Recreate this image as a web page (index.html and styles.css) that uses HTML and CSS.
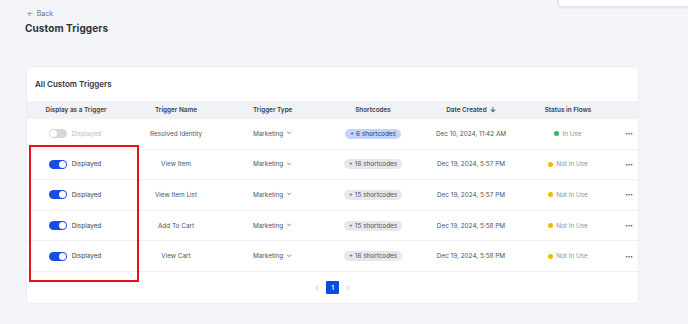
FILE: index.html
```html
<!DOCTYPE html>
<html>
<head>
<meta charset="utf-8">
<link rel="stylesheet" href="styles.css">
</head>
<body>
<div class="popover"></div>
<div class="page">
  <div class="back"><span class="arrow">&#8592;</span> Back</div>
  <h1 class="title">Custom Triggers</h1>
  <div class="card">
    <div class="card-title">All Custom Triggers</div>
    <div class="table">
      <div class="row head">
        <div class="c c1">Display as a Trigger</div>
        <div class="c c2">Trigger Name</div>
        <div class="c c3">Trigger Type</div>
        <div class="c c4">Shortcodes</div>
        <div class="c c5">Date Created <span class="sort">&#8595;</span></div>
        <div class="c c6">Status in Flows</div>
        <div class="c c7"></div>
      </div>
      <div class="row">
        <div class="c c1"><span class="toggle off"></span><span class="disp muted">Displayed</span></div>
        <div class="c c2">Resolved Identity</div>
        <div class="c c3">Marketing <span class="chev">&#8964;</span></div>
        <div class="c c4"><span class="pill blue">+ 6 shortcodes</span></div>
        <div class="c c5">Dec 10, 2024, 11:42 AM</div>
        <div class="c c6"><span class="dot green"></span><span class="status">In Use</span></div>
        <div class="c c7">&middot;&middot;&middot;</div>
      </div>
      <div class="row">
        <div class="c c1"><span class="toggle"></span><span class="disp">Displayed</span></div>
        <div class="c c2">View Item</div>
        <div class="c c3">Marketing <span class="chev">&#8964;</span></div>
        <div class="c c4"><span class="pill">+ 16 shortcodes</span></div>
        <div class="c c5">Dec 19, 2024, 5:57 PM</div>
        <div class="c c6"><span class="dot yellow"></span><span class="status">Not In Use</span></div>
        <div class="c c7">&middot;&middot;&middot;</div>
      </div>
      <div class="row">
        <div class="c c1"><span class="toggle"></span><span class="disp">Displayed</span></div>
        <div class="c c2">View Item List</div>
        <div class="c c3">Marketing <span class="chev">&#8964;</span></div>
        <div class="c c4"><span class="pill">+ 15 shortcodes</span></div>
        <div class="c c5">Dec 19, 2024, 5:57 PM</div>
        <div class="c c6"><span class="dot yellow"></span><span class="status">Not In Use</span></div>
        <div class="c c7">&middot;&middot;&middot;</div>
      </div>
      <div class="row">
        <div class="c c1"><span class="toggle"></span><span class="disp">Displayed</span></div>
        <div class="c c2">Add To Cart</div>
        <div class="c c3">Marketing <span class="chev">&#8964;</span></div>
        <div class="c c4"><span class="pill">+ 15 shortcodes</span></div>
        <div class="c c5">Dec 19, 2024, 5:58 PM</div>
        <div class="c c6"><span class="dot yellow"></span><span class="status">Not In Use</span></div>
        <div class="c c7">&middot;&middot;&middot;</div>
      </div>
      <div class="row">
        <div class="c c1"><span class="toggle"></span><span class="disp">Displayed</span></div>
        <div class="c c2">View Cart</div>
        <div class="c c3">Marketing <span class="chev">&#8964;</span></div>
        <div class="c c4"><span class="pill">+ 16 shortcodes</span></div>
        <div class="c c5">Dec 19, 2024, 5:58 PM</div>
        <div class="c c6"><span class="dot yellow"></span><span class="status">Not In Use</span></div>
        <div class="c c7">&middot;&middot;&middot;</div>
      </div>
    </div>
    <div class="pager">
      <span class="pg-arrow">&#8249;</span>
      <span class="pg-num">1</span>
      <span class="pg-arrow">&#8250;</span>
    </div>
    <div class="highlight"></div>
  </div>
</div>
</body>
</html>
```

FILE: styles.css
```css
* { box-sizing: border-box; }
html, body { margin: 0; padding: 0; }
body {
  background: #f4f5f8;
  font-family: Inter, "Noto Sans", sans-serif;
  color: #374151;
  width: 688px;
  height: 324px;
  overflow: hidden;
  position: relative;
}
.popover {
  position: absolute;
  left: 558px;
  top: -4px;
  width: 140px;
  height: 11px;
  background: #fff;
  border: 1px solid #e2e4e8;
  border-radius: 3px;
  box-shadow: 0 1px 2px rgba(0,0,0,0.08);
}
.page {
  padding: 9px 0 0 26px;
}
.back {
  font-size: 7px;
  color: #6b7280;
  height: 10px;
  line-height: 10px;
  padding-left: 1px;
}
.back .arrow { font-size: 7px; margin-right: 1px; }
.title {
  margin: 3px 0 0 -1px;
  font-size: 10px;
  font-weight: 700;
  color: #2d3340;
  line-height: 13px;
  letter-spacing: 0.1px;
}
.card {
  position: relative;
  margin-top: 31px;
  width: 613px;
  height: 238px;
  background: #fff;
  border: 1px solid #eceef2;
  border-radius: 4px;
}
.card-title {
  height: 34px;
  display: flex;
  align-items: center;
  padding-left: 8px;
  font-size: 8px;
  font-weight: 600;
  color: #2d3340;
}
.table { display: flex; flex-direction: column; }
.row {
  display: grid;
  grid-template-columns: 98px 102px 104px 84px 112px 82px 1fr;
  height: 30.6px;
  border-bottom: 1px solid #eef0f3;
  font-size: 6.4px;
  color: #4b5563;
}
.row.head {
  height: 18px;
  background: #f1f2f5;
  border-bottom: none;
  font-weight: 600;
  color: #374151;
  font-size: 6.4px;
}
.c {
  display: flex;
  align-items: center;
  justify-content: center;
  white-space: nowrap;
}
.c3 { justify-content: flex-start; padding-left: 26px; }
.c7 { justify-content: flex-start; padding-left: 16px; font-size: 9px; font-weight: 700; color: #4b5563; letter-spacing: -0.5px; }
.sort { margin-left: 3px; font-size: 7px; }
.toggle {
  width: 18px;
  height: 9px;
  border-radius: 5px;
  background: #1a4de6;
  position: relative;
  margin-right: 5px;
  margin-left: -2px;
}
.toggle::after {
  content: "";
  position: absolute;
  right: 1px;
  top: 1px;
  width: 7px;
  height: 7px;
  border-radius: 50%;
  background: #fff;
}
.toggle.off { background: #d4d7dd; }
.toggle.off::after { right: auto; left: 1px; }
.disp { color: #374151; }
.disp.muted { color: #b8bcc4; }
.chev { margin-left: 3px; font-size: 7px; position: relative; top: -2px; color: #6b7280; }
.pill {
  display: inline-block;
  padding: 0 5px;
  height: 10px;
  line-height: 10px;
  border-radius: 5px;
  background: #e6e8ec;
  color: #4b5563;
}
.pill.blue { background: #c5d4fa; color: #2c3a5c; }
.dot {
  width: 5px;
  height: 5px;
  border-radius: 50%;
  margin-right: 3px;
}
.dot.green { background: #2eb85c; }
.dot.yellow { background: #f5b800; }
.status { color: #8c929c; }
.pager {
  height: 32px;
  display: flex;
  align-items: center;
  justify-content: center;
  gap: 6px;
}
.pg-arrow { color: #c3c7ce; font-size: 9px; width: 6px; text-align: center; }
.pg-num {
  width: 13px;
  height: 13px;
  background: #0b49e0;
  color: #fff;
  border-radius: 1px;
  font-size: 6.5px;
  font-weight: 600;
  display: flex;
  align-items: center;
  justify-content: center;
}
.highlight {
  position: absolute;
  left: 2px;
  top: 78px;
  width: 110px;
  height: 137px;
  border: 2px solid #e5141c;
}
```
